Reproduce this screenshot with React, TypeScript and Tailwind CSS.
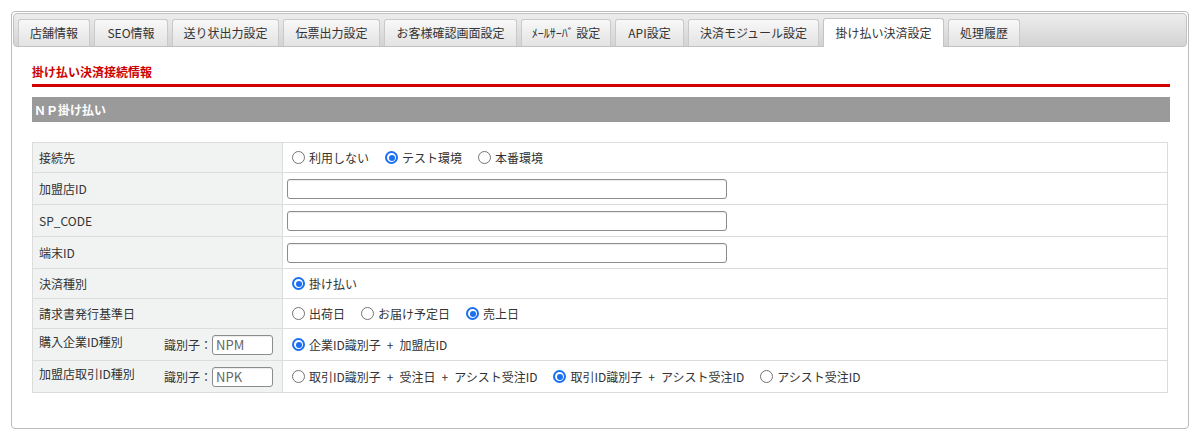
import React from 'react'

const tabs = [
  { label: '店舗情報', w: 'w-[72px]' },
  { label: 'SEO情報', w: 'w-[74px]' },
  { label: '送り状出力設定', w: 'w-[107px]' },
  { label: '伝票出力設定', w: 'w-[97px]' },
  { label: 'お客様確認画面設定', w: 'w-[133px]' },
  { label: 'ﾒｰﾙｻｰﾊﾞ 設定', w: 'w-[90px]' },
  { label: 'API設定', w: 'w-[69px]' },
  { label: '決済モジュール設定', w: 'w-[131px]' },
  { label: '掛け払い決済設定', w: 'w-[121px]' },
  { label: '処理履歴', w: 'w-[72px]' },
]

const ACTIVE = '掛け払い決済設定'

function Plus() {
  return <span className="mx-[6px]">+</span>
}

function Radio({ checked, children }: { checked?: boolean; children: React.ReactNode }) {
  return (
    <span className="mr-[11px] flex items-center">
      {checked ? (
        <span className="ml-[5px] mr-[4px] flex h-[13px] w-[13px] shrink-0 items-center justify-center rounded-full border-[2px] border-[#1a6ff2] bg-white">
          <span className="h-[6px] w-[6px] rounded-full bg-[#1a6ff2]" />
        </span>
      ) : (
        <span className="ml-[5px] mr-[4px] h-[13px] w-[13px] shrink-0 rounded-full border border-[#737373] bg-white" />
      )}
      <span className="whitespace-pre">{children}</span>
    </span>
  )
}

function TextInput({ value = '', small }: { value?: string; small?: boolean }) {
  return (
    <input
      readOnly
      value={value}
      className={`h-[20px] rounded-[3px] border border-[#8c8c8c] bg-white px-[3px] text-[13px] text-[#666] shadow-[inset_0_1px_1px_rgba(0,0,0,0.08)] outline-none ${
        small ? 'w-[61px]' : 'w-[440px]'
      }`}
    />
  )
}

function Row({
  label,
  tall,
  first,
  ident,
  children,
}: {
  label: string
  tall?: boolean
  first?: boolean
  ident?: string
  children: React.ReactNode
}) {
  return (
    <div className={`grid grid-cols-[250px_1fr] ${first ? '' : 'border-t border-[#dcdcdc]'}`}>
      <div
        className={`flex justify-between border-r border-[#dcdcdc] bg-[#f1f3f3] pl-[6px] pr-[9px] ${
          tall ? 'h-[31px]' : 'h-[29px]'
        } ${ident ? 'items-start' : 'items-center'}`}
      >
        <span className={ident ? 'pt-[4px] leading-[18px]' : 'leading-[18px]'}>{label}</span>
        {ident && (
          <span className="flex items-center self-center">
            <span>識別子：</span>
            <TextInput value={ident} small />
          </span>
        )}
      </div>
      <div className="flex items-center pl-[4px]">{children}</div>
    </div>
  )
}

export default function App() {
  return (
    <div className="min-h-screen bg-white p-[11px] pr-[12px] font-['Noto_Sans_CJK_JP','Noto_Sans',sans-serif] text-[12px] text-[#333]">
      <div className="rounded-[4px] border border-[#bcbcbc] p-[1px]">
        {/* tab bar */}
        <div className="flex h-[34px] items-end gap-[4px] rounded-[4px] border border-[#c2c2c2] bg-gradient-to-b from-[#ededed] to-[#d3d3d3] pl-[4px]">
          {tabs.map((t) =>
            t.label === ACTIVE ? (
              <div
                key={t.label}
                className={`-mb-[1px] flex h-[29px] items-center justify-center rounded-t-[3px] border border-b-0 border-[#c4c4c4] bg-white leading-[16px] whitespace-pre ${t.w}`}
              >
                {t.label}
              </div>
            ) : (
              <div
                key={t.label}
                className={`flex h-[27px] items-center justify-center rounded-t-[3px] border border-b-0 border-[#cacaca] bg-gradient-to-b from-[#f8f8f8] to-[#e3e3e3] leading-[16px] whitespace-pre ${t.w}`}
              >
                {t.label}
              </div>
            ),
          )}
        </div>

        {/* content */}
        <div className="pl-[19px] pr-[17px] pt-[17px] pb-[34px]">
          <div className="text-[12px] leading-[16px] font-bold text-[#cc0000]">掛け払い決済接続情報</div>
          <div className="mt-[4px] h-[3px] bg-[#d40000]" />
          <div className="mt-[10px] flex h-[25px] items-center bg-[#9a9a9a] pl-[2px] font-bold text-white">
            ＮＰ掛け払い
          </div>

          <div className="mt-[20px] mr-[2px] border border-[#dcdcdc]">
            <Row label="接続先" first>
              <Radio>利用しない</Radio>
              <Radio checked>テスト環境</Radio>
              <Radio>本番環境</Radio>
            </Row>
            <Row label="加盟店ID" tall>
              <TextInput />
            </Row>
            <Row label="SP_CODE" tall>
              <TextInput />
            </Row>
            <Row label="端末ID" tall>
              <TextInput />
            </Row>
            <Row label="決済種別">
              <Radio checked>掛け払い</Radio>
            </Row>
            <Row label="請求書発行基準日">
              <Radio>出荷日</Radio>
              <Radio>お届け予定日</Radio>
              <Radio checked>売上日</Radio>
            </Row>
            <Row label="購入企業ID種別" tall ident="NPM">
              <Radio checked>
                企業ID識別子<Plus />加盟店ID
              </Radio>
            </Row>
            <Row label="加盟店取引ID種別" tall ident="NPK">
              <Radio>
                取引ID識別子<Plus />受注日<Plus />アシスト受注ID
              </Radio>
              <Radio checked>
                取引ID識別子<Plus />アシスト受注ID
              </Radio>
              <Radio>アシスト受注ID</Radio>
            </Row>
          </div>
        </div>
      </div>
    </div>
  )
}
